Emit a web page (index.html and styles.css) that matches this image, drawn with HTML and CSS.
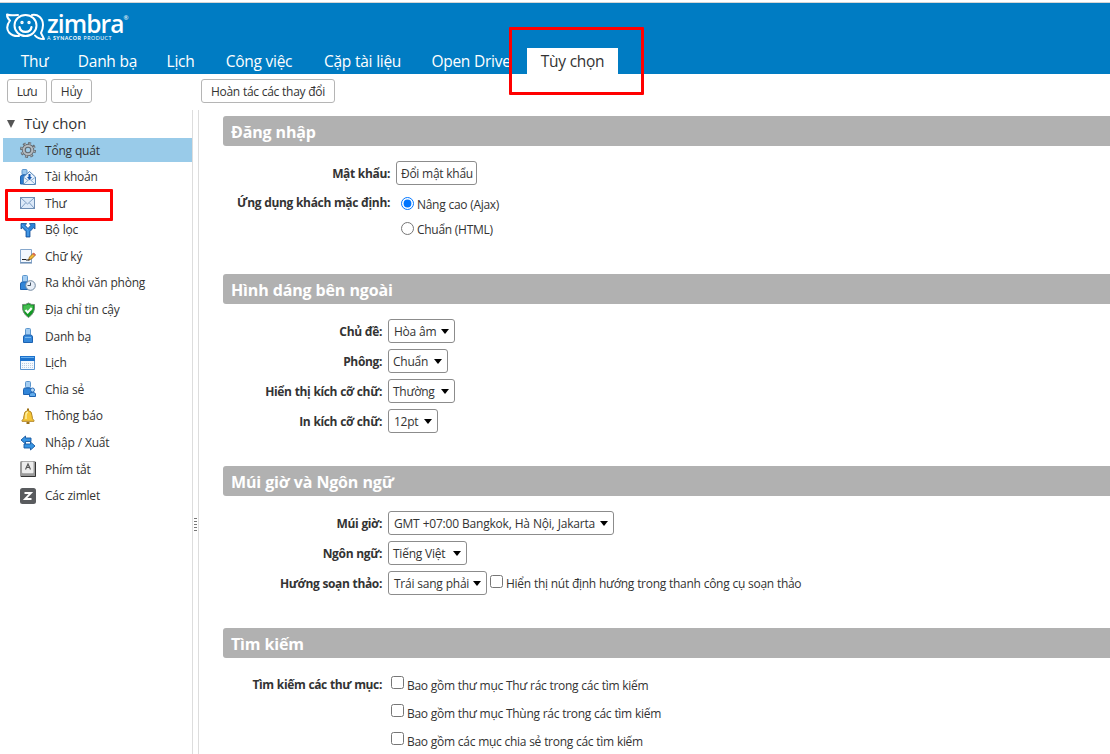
FILE: index.html
```html
<!DOCTYPE html>
<html lang="vi">
<head>
<meta charset="utf-8">
<title>Zimbra: Tùy chọn</title>
<link rel="stylesheet" href="styles.css">
</head>
<body>
<div class="app">
  <header class="header">
    <div class="logo">
      <svg class="logo-mark" width="40" height="28" viewBox="0 0 40 28" fill="none" stroke="#fff" stroke-width="2" stroke-linecap="round" stroke-linejoin="round">
        <path d="M12 2C8 2 5 3 1 1.500c0 3 1 4.500 3 6-3 4-4 8-1 12 3 3 6 4 10 3.500"/>
        <path d="M26 2c6-1 11 3 11 10 0 4-1 6-2 8l3 6c-5 0-7-1-9-3.500"/>
        <ellipse cx="19.500" cy="12.500" rx="11" ry="10.500"/>
        <path d="M13.500 14c1 6.500 11 6.500 12 0" stroke-width="2.200"/>
        <circle cx="16" cy="9.500" r=".7"/><circle cx="23" cy="9.500" r=".7"/>
      </svg>
      <div class="logo-words">
        <span class="logo-name">zimbra<span class="logo-reg">®</span></span>
        <span class="logo-sub">A <b>SYNACOR</b> PRODUCT</span>
      </div>
    </div>
    <nav class="tabs">
      <span class="tab">Thư</span>
      <span class="tab">Danh bạ</span>
      <span class="tab">Lịch</span>
      <span class="tab">Công việc</span>
      <span class="tab">Cặp tài liệu</span>
      <span class="tab">Open Drive</span>
      <span class="tab tab-active">Tùy chọn</span>
    </nav>
    <div class="mark mark-tab"></div>
  </header>

  <div class="toolbar">
    <span class="button save">Lưu</span>
    <span class="button cancel">Hủy</span>
    <span class="button undo">Hoàn tác các thay đổi</span>
  </div>

  <div class="body">
    <aside class="sidebar">
      <div class="tree-head"><span class="tri"></span><span>Tùy chọn</span></div>
      <div class="item selected">
        <svg class="icon" viewBox="0 0 16 16"><circle cx="8" cy="8" r="6.700" fill="none" stroke="#62696f" stroke-width="2.600" stroke-dasharray="2.800 2.462"/><circle cx="8" cy="8" r="4.200" fill="none" stroke="#62696f" stroke-width="4"/><circle cx="8" cy="8" r="4.300" fill="none" stroke="#b4bbc0" stroke-width="2"/><circle cx="8" cy="8" r="6.400" fill="none" stroke="#a4abb0" stroke-width="1.600" stroke-dasharray="1.400 3.626" stroke-dashoffset="-.6"/><circle cx="8" cy="8" r="1.500" fill="#a5cde6"/></svg>
        <span>Tổng quát</span></div>
      <div class="item">
        <svg class="icon" viewBox="0 0 16 16"><rect x="2" y=".5" width="5" height="5" rx="1" fill="#9bc7ee" stroke="#5c96cd"/><path d="M.5 15V8q0-2 2-2h4l2 9z" fill="#2f7fd2" stroke="#1e61ad"/><path d="M3.500 8 9.500 2.500 15.500 8v7.500h-12z" fill="#e9f2fc" stroke="#5585b8"/><path d="m4 15 5.500-5 5.500 5M4 8.500l4 3M15 8.500l-4 3" fill="none" stroke="#86abd2"/><path d="M8.500 5h2v3H12l-2.500 3L7 8h1.500z" fill="#1557b0"/></svg>
        <span>Tài khoản</span></div>
      <div class="item">
        <svg class="icon" viewBox="0 0 16 16"><rect x=".5" y="2.500" width="14" height="11" fill="#dce9f8" stroke="#6d8db4"/><path d="m1 3 6.500 6L14 3M1 13l4.500-5M14 13 9.500 8" fill="none" stroke="#7f9fc4"/></svg>
        <span>Thư</span>
        <div class="mark mark-item"></div></div>
      <div class="item">
        <svg class="icon" viewBox="0 0 16 16"><path d="M1 1.500h5.500L5.300 3.500 8 6.500l2.700-3-1.200-2H15V7l-1.500-1.300L10 9.500V15H6V9.500L2.500 5.700 1 7z" fill="#2d83d7" stroke="#174f96" stroke-width=".8"/><path d="m2 3 6 5v6" fill="none" stroke="#57a8ee"/></svg>
        <span>Bộ lọc</span></div>
      <div class="item">
        <svg class="icon" viewBox="0 0 16 16"><path d="M.5 1.500h11v13H.5z" fill="#f2f7fd" stroke="#86a7cc"/><path d="M0 15h12" stroke="#5b7fa8"/><path d="m2 12 1-1 1 1 1-1 1 1h2" fill="none" stroke="#222"/><path d="m8.500 12 1-3 4-4 2 2-4 4z" fill="#f2bd38" stroke="#8b5d10" stroke-width=".8"/><path d="m12.500 6 1-1.500 2 2-1 1.500z" fill="#df6656"/><path d="m8 13 .8-2 1.200 1z" fill="#222"/></svg>
        <span>Chữ ký</span></div>
      <div class="item">
        <svg class="icon" viewBox="0 0 16 16"><rect x="2.500" y=".5" width="5" height="6.500" rx="1" fill="#a4cdf2" stroke="#5c96cd"/><path d="M.5 14.500V9q0-2 2-2h5q2 0 2 2v5.500z" fill="#3185d8" stroke="#1d62b1"/><circle cx="10.500" cy="10.500" r="4.800" fill="#e7eef7" stroke="#70879f"/><path d="M10.500 7.500v3h-3" fill="none" stroke="#456"/></svg>
        <span>Ra khỏi văn phòng</span></div>
      <div class="item">
        <svg class="icon" viewBox="0 0 16 16"><path d="M8.500 1q3 2 6 1.500Q15.500 11 8.500 15.500 1.500 11 2.500 2.500q3 .5 6-1.500z" fill="#129a25" stroke="#738a78"/><path d="M8.500 2.500q2 1.200 4.500 1.200 0 3-1 5L4 9.500q-1-2-.5-6 3 .2 5-1z" fill="#45bd50"/><path d="m5.500 8 2.200 2.500 4-4.500" fill="none" stroke="#fff" stroke-width="2"/></svg>
        <span>Địa chỉ tin cậy</span></div>
      <div class="item">
        <svg class="icon" viewBox="0 0 16 16"><rect x="5.500" y=".5" width="5" height="7" rx="1" fill="#a4cdf2" stroke="#5c96cd"/><path d="M3.500 14.500V9q0-2 2-2h5q2 0 2 2v5.500z" fill="#3689db" stroke="#1d62b1"/><path d="M5 9.500h6" stroke="#79b8f0"/></svg>
        <span>Danh bạ</span></div>
      <div class="item">
        <svg class="icon" viewBox="0 0 16 16"><path d="M.5 1.500h14v13H.5z" fill="#f4f9ff" stroke="#5a94d1"/><path d="M0 1h15v5H0z" fill="#1d72cc"/><path d="M1 2.500h13" stroke="#69b0ef"/><path d="M2 8.500h11M2 10.500h11M2 12.500h11" stroke="#bccde0" stroke-dasharray="1 1"/></svg>
        <span>Lịch</span></div>
      <div class="item">
        <svg class="icon" viewBox="0 0 16 16"><rect x="5.500" y=".5" width="5" height="6" rx="1" fill="#a4cdf2" stroke="#5c96cd"/><path d="M3.500 13.500V8.500q0-1.500 1.500-1.500h5.500l2 6.500z" fill="#3185d8" stroke="#1d62b1"/><circle cx="12.500" cy="9" r="2" fill="#b9dbf8" stroke="#2d72be"/><path d="M9.500 15.500V13q0-1.500 3-1.500t3 1.500v2.500z" fill="#63aceb" stroke="#1d62b1"/></svg>
        <span>Chia sẻ</span></div>
      <div class="item">
        <svg class="icon" viewBox="0 0 16 16"><path d="M8 .5v3M6.500 15h3" stroke="#9b7016" stroke-width="2"/><path d="M8 2.500q-4 .5-4 5 0 4-2 5v.8h12v-.8q-2-1-2-5 0-4.500-4-5z" fill="#f5c638" stroke="#b18424"/><path d="M6 11V7q0-2.500 2-3" fill="none" stroke="#fff0a0" stroke-width="1.500"/></svg>
        <span>Thông báo</span></div>
      <div class="item">
        <svg class="icon" viewBox="0 0 16 16"><path d="M1 5 5.500 1v2H11v3.500H5.500V9z" fill="#3794e2" stroke="#17579f" stroke-width=".9"/><path d="M15 11 10.500 7v2H4v4h6.500v2z" fill="#3794e2" stroke="#17579f" stroke-width=".9"/></svg>
        <span>Nhập / Xuất</span></div>
      <div class="item">
        <svg class="icon" viewBox="0 0 16 16"><rect width="16" height="16" rx="1.500" fill="#9a9a9a"/><path d="M1 15.500h14.500V1" fill="none" stroke="#333"/><rect x="2" y=".8" width="11.500" height="11.500" rx="1" fill="#ececec"/><path d="m5.500 8.500 2.500-5.500 2.500 5.500M6.500 6.500h3" fill="none" stroke="#555" stroke-width="1.200"/></svg>
        <span>Phím tắt</span></div>
      <div class="item">
        <svg class="icon" viewBox="0 0 16 16"><rect width="16" height="16" rx="2.500" fill="#595b5e"/><path d="M4.500 5H11L5 11h6.500" fill="none" stroke="#fff" stroke-width="1.800"/></svg>
        <span>Các zimlet</span></div>
    </aside>
    <div class="sash"><span class="grip"></span></div>

    <main class="content">
      <section class="section login">
        <h2 class="title">Đăng nhập</h2>
        <div class="row"><span class="label">Mật khẩu:</span><span class="field password">Đổi mật khẩu</span></div>
        <div class="row clients"><span class="label">Ứng dụng khách mặc định:</span>
          <div class="options">
            <label class="option"><input type="radio" name="client" checked><span>Nâng cao (Ajax)</span></label>
            <label class="option"><input type="radio" name="client"><span>Chuẩn (HTML)</span></label>
          </div>
        </div>
      </section>
      <section class="section look">
        <h2 class="title">Hình dáng bên ngoài</h2>
        <div class="row"><span class="label">Chủ đề:</span><span class="field select w67 inset">Hòa âm</span></div>
        <div class="row"><span class="label">Phông:</span><span class="field select w60">Chuẩn</span></div>
        <div class="row"><span class="label">Hiển thị kích cỡ chữ:</span><span class="field select w67">Thường</span></div>
        <div class="row"><span class="label">In kích cỡ chữ:</span><span class="field select w50 inset">12pt</span></div>
      </section>
      <section class="section locale">
        <h2 class="title">Múi giờ và Ngôn ngữ</h2>
        <div class="row"><span class="label">Múi giờ:</span><span class="field select w226">GMT +07:00 Bangkok, Hà Nội, Jakarta</span></div>
        <div class="row"><span class="label">Ngôn ngữ:</span><span class="field select w79">Tiếng Việt</span></div>
        <div class="row"><span class="label">Hướng soạn thảo:</span><span class="field select w99">Trái sang phải</span>
          <label class="option direction"><input type="checkbox"><span>Hiển thị nút định hướng trong thanh công cụ soạn thảo</span></label></div>
      </section>
      <section class="section search">
        <h2 class="title">Tìm kiếm</h2>
        <div class="row"><span class="label">Tìm kiếm các thư mục:</span>
          <div class="options">
            <label class="option"><input type="checkbox"><span>Bao gồm thư mục Thư rác trong các tìm kiếm</span></label>
            <label class="option"><input type="checkbox"><span>Bao gồm thư mục Thùng rác trong các tìm kiếm</span></label>
            <label class="option"><input type="checkbox"><span>Bao gồm các mục chia sẻ trong các tìm kiếm</span></label>
          </div>
        </div>
      </section>
    </main>
  </div>
</div>
</body>
</html>
```

FILE: styles.css
```css
* { box-sizing: border-box; }
body {
  margin: 0;
  font: 12px/16px "Open Sans", "Noto Sans", sans-serif;
  letter-spacing: -0.3px;
  word-spacing: 0.25px;
  color: #333;
  background: #fff;
}
.app { height: 754px; display: flex; flex-direction: column; overflow: hidden; padding-top: 2px; }
.header {
  position: relative;
  flex: none;
  height: 72px;
  border-top: 1px solid #d5d5d5;
  background: #007cc3;
  color: #fff;
  display: flex;
  flex-direction: column;
  justify-content: space-between;
}
.logo { display: flex; padding: 10px 0 0 6px; height: 42px; }
.logo-mark { flex: none; }
.logo-words { display: flex; flex-direction: column; padding-left: 1px; }
.logo-name { display: flex; height: 21px; font: 600 24.5px/21px "Open Sans", sans-serif; letter-spacing: -0.9px; white-space: nowrap; }
.logo-reg { font-size: 6px; line-height: 10px; height: 10px; letter-spacing: 0; }
.logo-sub { font: 5.2px/6px Lato, sans-serif; letter-spacing: 0.55px; margin-top: 1px; white-space: nowrap; }
.tabs {
  display: grid;
  grid-template-columns: 55px 85px 55px 96px 105px 106px 91px;
  gap: 3px;
  padding-left: 7px;
}
.tab { height: 26px; line-height: 27px; font-size: 15.5px; letter-spacing: -0.28px; text-align: center; white-space: nowrap; }
.tab-active { background: #fff; color: #333; }
.mark { position: absolute; border: 3px solid #f00; border-radius: 1px; }
.mark-tab { left: 509px; top: 24px; width: 135px; height: 68px; }
.mark-item { left: 2px; top: -2px; width: 108px; height: 32px; }
.toolbar { flex: none; height: 36px; display: flex; padding: 5px 7px 0; gap: 4px; }
.button {
  height: 24px;
  border: 1px solid #b5b5b5;
  border-radius: 3px;
  line-height: 23px;
  text-align: center;
  white-space: nowrap;
}
.save { width: 40px; }
.cancel { width: 41px; }
.undo { width: 134px; margin-left: 105px; }
.body { flex: 1; min-height: 0; display: flex; }
.sidebar { flex: none; width: 193px; padding-left: 3px; border-right: 1px solid #ddd; }
.tree-head { height: 28px; display: flex; align-items: center; gap: 9px; padding: 0 0 3px 4px; font-size: 15px; letter-spacing: -0.2px; }
.tri { border: solid transparent; border-width: 8px 4.5px 0; border-top-color: #555; margin-top: 2px; }
.item { position: relative; height: 24px; margin-bottom: 2.6px; display: flex; align-items: center; gap: 9px; padding-left: 17px; white-space: nowrap; letter-spacing: -0.22px; }
.item > span { padding-top: 1px; }
.selected { background: #99cbe9; }
.icon { flex: none; width: 16px; height: 16px; }
.sash { flex: none; width: 6px; border-right: 1px solid #ddd; padding: 408px 0 0 1px; }
.grip { display: block; width: 3px; height: 13px; background: repeating-linear-gradient(#777 0 1px, transparent 1px 3px); }
.content { flex: 1; min-width: 0; padding: 6px 0 0 24px; }
.title {
  height: 30px;
  margin: 0 0 15px;
  padding-left: 8px;
  border-radius: 3px 0 0 3px;
  background: #b1b1b1;
  color: #fff;
  font: 700 16px/33px "Open Sans", sans-serif;
  letter-spacing: -0.17px;
}
.login { height: 158px; }
.look { height: 192px; }
.locale { height: 162px; }
.row { display: grid; grid-template-columns: 159px max-content max-content; column-gap: 6px; height: 30px; line-height: 24px; white-space: nowrap; }
.login .row { grid-template-columns: 167px max-content; }
.label { font-weight: 700; text-align: right; letter-spacing: -0.35px; padding-top: 1px; }
.field { height: 24px; line-height: 24px; padding-left: 4px; border: 1px solid #8c8c8c; border-radius: 3px; }
.password { width: 81px; }
.select { display: flex; justify-content: space-between; padding-right: 5px; letter-spacing: -0.25px; }
.select::after { content: ""; width: 8px; height: 5px; margin-top: 9px; background: #000; clip-path: polygon(0 0, 100% 0, 50% 100%); }
.inset, .w226, .w99 { padding-left: 5px; }
.w50 { width: 50px; }
.w60 { width: 60px; }
.w67 { width: 67px; }
.w79 { width: 79px; }
.w99 { width: 99px; }
.w226 { width: 226px; letter-spacing: -0.21px; }
.option { display: flex; align-items: center; gap: 3px; }
.option input { flex: none; width: 13px; height: 13px; margin: 0; }
.clients .label { margin-top: -1px; }
.login .option { height: 25px; padding-left: 5px; }
.login .option span { padding-top: 2px; }
.direction { height: 24px; margin-left: -3px; letter-spacing: -0.29px; }
.direction span { padding-top: 2px; }
.direction input { margin-top: -4px; }
.search .label { padding-top: 0; }
.search .options { margin-top: -2px; padding-left: 3px; }
.search .option { height: 28px; }
.search .option span { padding-top: 1px; }
.search .option input { margin-top: -5px; }
```
